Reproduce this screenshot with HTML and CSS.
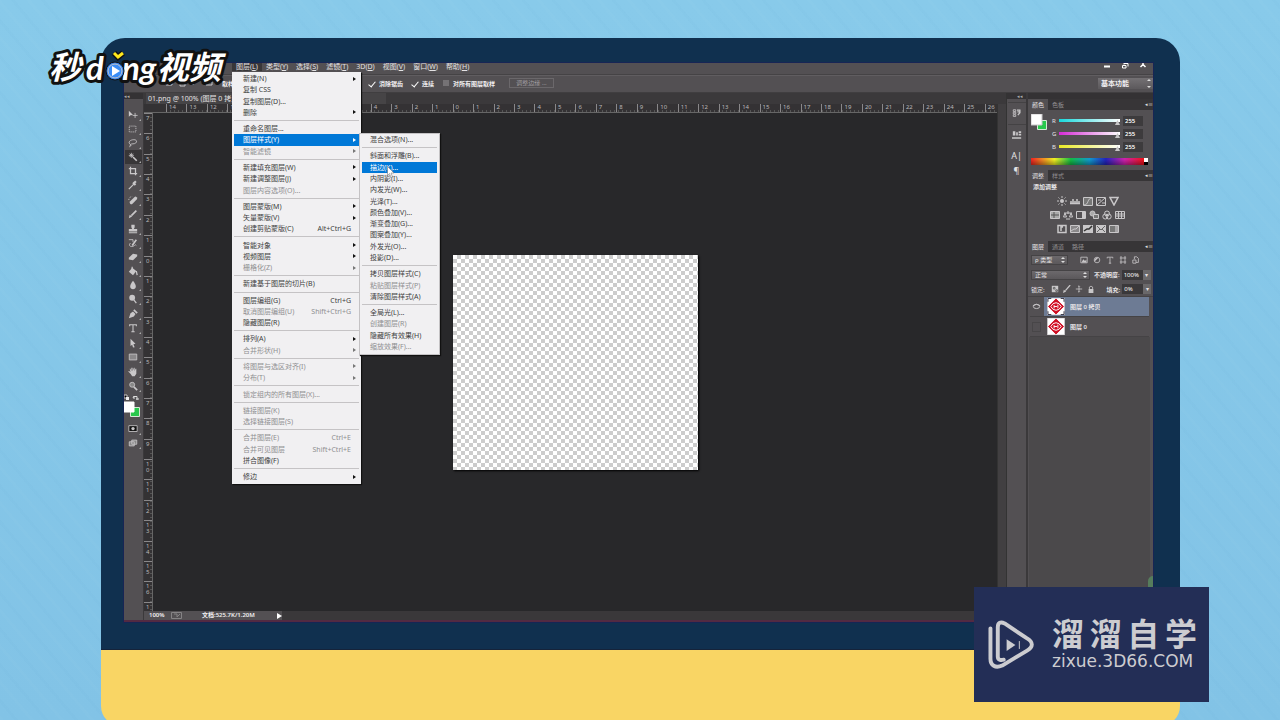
FILE: index.html
```html
<!DOCTYPE html>
<html lang="zh-CN">
<head>
<meta charset="utf-8">
<title>图层样式</title>
<link rel="stylesheet" href="styles.css">
</head>
<body>
<div class="monitor">
<main class="screen">
  <header class="menubar">
    <nav class="menus">
      <button class="open">图层(<u>L</u>)</button><button>类型(<u>Y</u>)</button><button>选择(<u>S</u>)</button><button>滤镜(<u>T</u>)</button><button>3D(<u>D</u>)</button><button>视图(<u>V</u>)</button><button>窗口(<u>W</u>)</button><button>帮助(<u>H</u>)</button>
    </nav>
    <div class="winbtns">
      <button aria-label="最小化"><svg viewBox="0 0 8 6"><path d="M1 3.500h6" stroke-width="2"/></svg></button>
      <button aria-label="还原"><svg viewBox="0 0 8 6"><path d="M3 0v1.500M3 .5h4v3M1.500 2.500h3.500v2.500H1.500z"/></svg></button>
      <button aria-label="关闭"><svg viewBox="0 0 8 6"><path d="M4 0v1.500L1.500 4M4 1.500L6.500 4" stroke-width="1.500"/></svg></button>
    </div>
  </header>
  <div class="options">
    <div class="opt-left"><svg class="bits" viewBox="0 0 50 8"><path d="M1 1h6v5H1zM15 5h5v2h-5zM28 2v4M41 1h6v5h-6z"/></svg><span>取样</span></div>
    <label><input type="checkbox" checked>消除锯齿</label>
    <label><input type="checkbox" checked>连续</label>
    <label><input type="checkbox">对所有图层取样</label>
    <button class="refine" disabled>调整边缘 ...</button>
    <div class="pick workspace"><select aria-label="工作区"><option>基本功能</option></select></div>
  </div>
  <div class="body">
    <aside class="tools">
      <div class="grip">◂◂</div>
      <button aria-label="移动"><svg viewBox="0 0 12 12"><path class="f" d="M1 1l5 5-3 .3L1 8z"/><path d="M8.500 3.500v6M5.500 6.500h6"/></svg></button>
      <button aria-label="矩形选框"><svg viewBox="0 0 12 12"><path d="M1.500 2.500h8v7h-8z" stroke-dasharray="1.500 1"/></svg></button>
      <button aria-label="套索"><svg viewBox="0 0 12 12"><path d="M3 8C-1 5 3 2 7 2c5 0 4 5-1 5-4 0-4 2-2 2M3 8l-1 3"/></svg></button>
      <button aria-label="魔棒" class="on"><svg viewBox="0 0 12 12"><path d="M6 6l4.500 4.500" stroke-width="2"/><path d="M4 1v6M1 4h6M2 2l4 4M6 2L2 6"/></svg></button>
      <button aria-label="裁剪"><svg viewBox="0 0 12 12"><path d="M3 1v8h8M1 3h8v8" stroke-width="1.500"/></svg></button>
      <button aria-label="吸管" class="end"><svg viewBox="0 0 12 12"><path d="M1 11l6-6" stroke-width="1.500"/><path d="M6 3l3 3M7 4l2.500-2.500" stroke-width="2.500"/></svg></button>
      <button aria-label="修复"><svg viewBox="0 0 12 12"><path d="M4 9l5-5" stroke-width="4" stroke-linecap="round"/><path d="M1 6c0-3 2-4 4-4" stroke-dasharray="1 1"/></svg></button>
      <button aria-label="画笔" class="end"><svg viewBox="0 0 12 12"><path d="M4 8l6-6" stroke-width="2"/><path class="f" d="M1 11l1-4 3 2z"/></svg></button>
      <button aria-label="图章"><svg viewBox="0 0 12 12"><path class="f" d="M4 1h4v3L7 6h4v3H1V6h4L4 4zM1 10h10v1H1z"/></svg></button>
      <button aria-label="历史画笔"><svg viewBox="0 0 12 12"><path d="M5 9l5-7" stroke-width="2"/><path d="M1 2h5v3M3 6c-3 3 0 5 3 4s2-3 4-1"/></svg></button>
      <button aria-label="橡皮"><svg viewBox="0 0 12 12"><path class="f" d="M1 7l5-5 5 1v2l-5 5-5-1z"/></svg></button>
      <button aria-label="油漆桶"><svg viewBox="0 0 12 12"><path class="f" d="M1 7l4-5 5 4-4 5z"/><path d="M5 4V1M10 6l1 5" stroke-width="1.500"/></svg></button>
      <button aria-label="模糊"><svg viewBox="0 0 12 12"><path class="f" d="M6 1c5 6 4 10 0 10S1 7 6 1"/></svg></button>
      <button aria-label="减淡" class="end"><svg viewBox="0 0 12 12"><circle class="f" cx="5" cy="4.500" r="3.500"/><path d="M7 7l3 4" stroke-width="1.500"/></svg></button>
      <button aria-label="钢笔"><svg viewBox="0 0 12 12"><path class="f" d="M1 11l2-6 3-2 3 3-2 3z"/><path d="M7 1l4 4" stroke-width="2"/></svg></button>
      <button aria-label="文字" class="end"><svg viewBox="0 0 12 12"><path d="M2 4V2h8v2M6 2v8M4 10.500h4" stroke-width="1.300"/></svg></button>
      <button aria-label="路径选择"><svg viewBox="0 0 12 12"><path class="f" d="M3 1l6 6-2.500.5L8 11l-2 .5L5 8 3 9.500z"/></svg></button>
      <button aria-label="矩形" class="end"><svg viewBox="0 0 12 12"><path d="M1.500 2.500h9v7h-9z" fill="#8a888a"/></svg></button>
      <button aria-label="抓手"><svg viewBox="0 0 12 12"><path class="f" d="M3 8L0 5l2 0 1 1-1-4h1l1 3V1h1.500v4L7 1h1v4l1-3h1l0 6-2 3H5z"/></svg></button>
      <button aria-label="缩放"><svg viewBox="0 0 12 12"><circle cx="5" cy="4.500" r="3" fill="#888"/><path d="M7 7l4 4" stroke-width="2"/></svg></button>
      <svg class="swatches" viewBox="0 0 19 26"><path d="M0 1h3v3H0z" fill="#000"/><path d="M2 3h3v3H2z" fill="#eee" stroke="none"/><path d="M10 5V2.500h3V6M9 4l1-2M12 5h3" stroke="#ddd"/><path d="M6.500 13.500h9v9h-9z" fill="#28c84c" stroke="#d5e9d5"/><path d="M0 8h10v10H0z" fill="#fff" stroke="#fff"/></svg>
      <button aria-label="快速蒙版"><svg viewBox="0 0 12 12"><path d="M1 2h10v7H1z" fill="#111"/><circle class="f" cx="6" cy="5.500" r="2"/></svg></button>
      <button aria-label="屏幕模式"><svg viewBox="0 0 12 12"><path d="M4.500 2.500h6v5h-6zM1.500 4.500h6v5h-6z" fill="#888"/></svg></button>
    </aside>
    <section class="document">
      <div class="tab">01.png @ 100% (图层 0 拷贝</div>
      <div class="ruler-x"><div class="marks">
        <span>14</span><span>13</span><span>12</span><span>11</span><span>10</span><span>9</span><span>8</span><span>7</span><span>6</span><span>5</span><span>4</span><span>3</span><span>2</span><span>1</span><span>0</span><span>1</span><span>2</span><span>3</span><span>4</span><span>5</span><span>6</span><span>7</span><span>8</span><span>9</span><span>10</span><span>11</span><span>12</span><span>13</span><span>14</span><span>15</span><span>16</span><span>17</span><span>18</span><span>19</span><span>20</span><span>21</span><span>22</span><span>23</span><span>24</span><span>25</span><span>26</span>
      </div></div>
      <div class="work">
        <div class="ruler-y"><div class="marks">
          <span>7</span><span>6</span><span>5</span><span>4</span><span>3</span><span>2</span><span>1</span><span>0</span><span>1</span><span>2</span><span>3</span><span>4</span><span>5</span><span>6</span><span>7</span><span>8</span><span>9</span><span>1<br>0</span><span>1<br>1</span><span>1<br>2</span><span>1<br>3</span><span>1<br>4</span><span>1<br>5</span><span>1<br>6</span><span>1</span>
        </div></div>
        <div class="stage"><div class="artboard"></div></div>
      </div>
      <footer class="status"><span class="zoom">100%</span><svg viewBox="0 0 11 8"><path d="M.5.5h10v6H.5zM3 2h3v3M6 5l3-3" fill="none" stroke="#858385"/></svg><span class="size">文档:525.7K/1.20M</span><svg class="next" viewBox="0 0 5 6"><path d="M0 0l5 3-5 3z" fill="#fff" stroke="none"/></svg></footer>
    </section>
    <div class="scroll"></div>
    <aside class="strip">
      <div class="grip">◂◂</div>
      <button aria-label="历史记录"><svg viewBox="0 0 12 12"><path d="M1.500 1.500h3v2h-3zM1.500 4.500h3v2h-3zM1.500 7.500h3v2h-3z"/><path d="M6 2h3.500v3L7 8M6.500 4h3" stroke-width="1.500"/></svg></button>
      <button aria-label="属性" class="end"><svg viewBox="0 0 12 12"><path class="f" d="M1 1h3v5H1zM5 2h2v4H5zM8 1h3v2H8zM8 4h3v2H8zM0 8h11v2H0z"/></svg></button>
      <button aria-label="字符" class="type">A|</button>
      <button aria-label="段落" class="type">¶</button>
    </aside>
    <aside class="panels">
      <div class="grip"></div>
      <div class="tabs"><button class="on">颜色</button><button>色板</button><i>◂≡</i></div>
      <div class="color">
        <svg class="fgbg" viewBox="0 0 18 18"><path d="M6.500 6.500h9v9h-9z" fill="#28c84c" stroke="#d5e9d5"/><path d="M0 0h11v11H0z" fill="#fff"/></svg>
        <div class="sliders">
          <div class="channel"><label for="r">R</label><input id="r" class="cyan" type="range" max="255" value="255"><input type="text" value="255" aria-label="R 值"></div>
          <div class="channel"><label for="g">G</label><input id="g" class="pink" type="range" max="255" value="255"><input type="text" value="255" aria-label="G 值"></div>
          <div class="channel"><label for="b">B</label><input id="b" class="yellow" type="range" max="255" value="255"><input type="text" value="255" aria-label="B 值"></div>
        </div>
      </div>
      <div class="ramp"></div>
      <div class="tabs"><button class="on">调整</button><button>样式</button><i>◂≡</i></div>
      <div class="adjust">
        <p>添加调整</p>
        <div>
          <svg viewBox="0 0 10 10"><circle class="f" cx="5" cy="5" r="2"/><path d="M5 0v2M5 8v2M0 5h2M8 5h2M1.500 1.500l1 1M7.500 7.500l1 1M1.500 8.500l1-1M7.500 2.500l1-1"/></svg>
          <svg viewBox="0 0 10 10"><path d="M0 7.500h10M1 7V5M3 7V3M5 7V5M7 7V3M9 7V5" stroke-width="1.500"/></svg>
          <svg viewBox="0 0 10 10"><path d="M.5 1.500h9v8h-9z" fill="#777"/><path d="M1 9c5 0 3-7 8-7"/></svg>
          <svg viewBox="0 0 10 10"><path d="M.5 1.500h9v8h-9zM1 9l8-7M2 4h3M6 7h3"/></svg>
          <svg viewBox="0 0 10 10"><path d="M1 1.500h8L5 9z" stroke-width="1.500"/></svg>
        </div>
        <div>
          <svg viewBox="0 0 10 10"><path d="M.5 1.500h9v7h-9z" fill="#aaa"/><path d="M1 5h8M4 2v6" stroke="#555"/></svg>
          <svg viewBox="0 0 10 10"><path d="M5 1v3M1 3h8M2 3L.5 7h3zM8 3L6.500 7h3zM3 9h4"/></svg>
          <svg viewBox="0 0 10 10"><path d="M.5 1.500h9v7h-9z"/><path class="f" d="M6 2h3v6H6z"/></svg>
          <svg viewBox="0 0 10 10"><circle cx="3.500" cy="3.500" r="2.500" fill="#aaa"/><path d="M4.500 4.500h5v4h-5z" fill="#777"/></svg>
          <svg viewBox="0 0 10 10"><circle cx="5" cy="3.500" r="2.500"/><circle cx="3.300" cy="6.500" r="2.500"/><circle cx="6.700" cy="6.500" r="2.500"/></svg>
          <svg viewBox="0 0 10 10"><path d="M.5 1.500h9v7h-9zM1 4h8M1 6h8M3.500 2v6M6.500 2v6"/></svg>
        </div>
        <div>
          <svg viewBox="0 0 10 10"><path d="M1 1.500h8v7H1zM6 3H4v4" stroke-width="1.500"/></svg>
          <svg viewBox="0 0 10 10"><path d="M.5 1.500h9v7h-9z" fill="#8a888a"/><path d="M1 7l3-2h2l3-3"/></svg>
          <svg viewBox="0 0 10 10"><path class="f" d="M0 1h10v8H0z"/><path d="M1 7l3-2h2l3-3" stroke="#333" stroke-width="1.500"/></svg>
          <svg viewBox="0 0 10 10"><path class="f" d="M0 1h10v8H0z"/><path d="M1 2l4 4 4-4M1 8l3-3M9 8L6 5" stroke="#666"/></svg>
          <svg viewBox="0 0 10 10"><path d="M.5 1.500h9v7h-9z" fill="#777"/><path class="f" d="M6 2h3v6H6z" opacity=".6"/></svg>
        </div>
      </div>
      <div class="tabs"><button class="on">图层</button><button>通道</button><button>路径</button><i>◂≡</i></div>
      <div class="row filter">
        <div class="pick"><select aria-label="筛选"><option>ρ 类型</option></select></div>
        <span class="icons">
          <svg viewBox="0 0 10 10"><path d="M1 1.500h8v7H1z"/><path class="f" d="M2 8l2-4 2 2 2-1v3z"/></svg>
          <svg viewBox="0 0 10 10"><circle cx="5" cy="5" r="3.500"/><path class="f" d="M2 7a4 4 0 0 1 5-5z"/></svg>
          <svg viewBox="0 0 10 10"><path d="M1.500 3V1.500h7V3M5 2v7M3.500 9h3"/></svg>
          <svg viewBox="0 0 10 10"><path d="M2.500 0v10M7.500 0v10M1 2.500h8M1 7.500h8"/></svg>
          <svg viewBox="0 0 10 10"><path d="M3 4V1h3l2 2v5H5M1 5h4v4H1z"/></svg>
        </span>
      </div>
      <div class="row mode"><div class="pick"><select aria-label="混合模式"><option>正常</option></select></div><label for="op">不透明度:</label><input id="op" value="100%"><button aria-label="不透明度滑块">▾</button></div>
      <div class="row lock"><span>锁定:</span>
        <span class="icons">
          <svg viewBox="0 0 10 10"><path class="f" d="M1 1h8v8H1z"/><path d="M3 3h2v2H3zM6 6h2v2H6z" stroke="#555"/></svg>
          <svg viewBox="0 0 10 10"><path d="M3 7l6-7" stroke-width="1.500"/><path class="f" d="M0 10l1-4 3 2z"/></svg>
          <svg viewBox="0 0 10 10"><path d="M5 1v8M1 5h8M4 2l1-1 1 1M4 8l1 1 1-1"/></svg>
          <svg viewBox="0 0 10 10"><path class="f" d="M2 5h6v5H2z"/><path d="M3 5V2.500q2-2 4 0V5"/></svg>
        </span>
        <label for="fill">填充:</label><input id="fill" value="0%"><button aria-label="填充滑块">▾</button></div>
      <div class="layer on"><span class="eye"><svg viewBox="0 0 10 10"><ellipse cx="5" cy="5" rx="3.500" ry="2.300"/><path d="M1 4q4-3 8 0"/></svg></span><svg class="thumb" viewBox="0 0 18 18"><path d="M0 0h18v18H0z" fill="#fff"/><path d="M9 1l8 8-8 8-8-8z" fill="#d01025" stroke="#d01025"/><path d="M3.500 9q2-4 5.500-4t5.500 4q-2 4-5.500 4T3.500 9z" stroke="#fff"/><path d="M7 7.500v3.500M7 9h3M11 7v4" stroke="#fff"/><path d="M.5 4V.5H4M14 .5h3.500V4M17.500 14v3.500H14M4 17.500H.5V14" stroke="#334"/></svg><span>图层 0 拷贝</span></div>
      <div class="layer"><span class="eye hidden"></span><svg class="thumb" viewBox="0 0 18 18"><path d="M0 0h18v18H0z" fill="#fff"/><path d="M9 1l8 8-8 8-8-8z" fill="#d01025" stroke="#d01025"/><path d="M3.500 9q2-4 5.500-4t5.500 4q-2 4-5.500 4T3.500 9z" stroke="#fff"/><path d="M7 7.500v3.500M7 9h3M11 7v4" stroke="#fff"/></svg><span>图层 0</span></div>
      <div class="rest"></div>
    </aside>
  </div>

  <ul class="menu main-menu">
    <li class="sub">新建(N)</li><li>复制 CSS</li><li>复制图层(D)...</li><li class="sub">删除</li><hr>
    <li>重命名图层...</li><li class="sub hot">图层样式(Y)</li><li class="sub off">智能滤镜</li><hr>
    <li class="sub">新建填充图层(W)</li><li class="sub">新建调整图层(J)</li><li class="off">图层内容选项(O)...</li><hr>
    <li class="sub">图层蒙版(M)</li><li class="sub">矢量蒙版(V)</li><li>创建剪贴蒙版(C)<kbd>Alt+Ctrl+G</kbd></li><hr>
    <li class="sub">智能对象</li><li class="sub">视频图层</li><li class="sub off">栅格化(Z)</li><hr>
    <li>新建基于图层的切片(B)</li><hr>
    <li>图层编组(G)<kbd>Ctrl+G</kbd></li><li class="off">取消图层编组(U)<kbd>Shift+Ctrl+G</kbd></li><li>隐藏图层(R)</li><hr>
    <li class="sub">排列(A)</li><li class="sub off">合并形状(H)</li><hr>
    <li class="sub off">将图层与选区对齐(I)</li><li class="sub off">分布(T)</li><hr>
    <li class="off">锁定组内的所有图层(X)...</li><hr>
    <li class="off">链接图层(K)</li><li class="off">选择链接图层(S)</li><hr>
    <li class="off">合并图层(E)<kbd>Ctrl+E</kbd></li><li class="off">合并可见图层<kbd>Shift+Ctrl+E</kbd></li><li>拼合图像(F)</li><hr>
    <li class="sub">修边</li>
  </ul>
  <ul class="menu sub-menu">
    <li>混合选项(N)...</li><hr>
    <li>斜面和浮雕(B)...</li><li class="hot">描边(K)...</li><li>内阴影(I)...</li><li>内发光(W)...</li><li>光泽(T)...</li><li>颜色叠加(V)...</li><li>渐变叠加(G)...</li><li>图案叠加(Y)...</li><li>外发光(O)...</li><li>投影(D)...</li><hr>
    <li>拷贝图层样式(C)</li><li class="off">粘贴图层样式(P)</li><li>清除图层样式(A)</li><hr>
    <li>全局光(L)...</li><li class="off">创建图层(R)</li><li>隐藏所有效果(H)</li><li class="off">缩放效果(F)...</li>
  </ul>
  <svg class="cursor" viewBox="0 0 8 12"><path d="M.5.5v9l2-2 1.500 4 1.500-.5-1.500-4h3z" fill="#fff" stroke="#666" stroke-width=".5"/></svg>
  <i class="bubble"></i>
</main>
</div>
<div class="base"></div>

<svg class="logo" viewBox="0 0 190 56">
  <g class="logo-text">
    <text x="5" y="36" class="han">秒</text><text x="42" y="37">d</text><text x="78" y="37">ng</text><text x="113" y="36" class="han">视频</text>
  </g>
  <circle cx="71" cy="28" r="9" fill="#2f7fea" stroke="#111"/><circle cx="71" cy="28" r="7" fill="#3b8df5"/>
  <path d="M68 23l8 5-8 5z" fill="#fff" stroke="none"/>
  <path d="M70 10l4 4 5-4" stroke="#111" stroke-width="6"/><path d="M70 10l4 4 5-4" stroke="#ffe81c" stroke-width="3"/>
</svg>

<aside class="brand">
  <svg viewBox="0 0 48 52"><g stroke="#ccccd0" stroke-linecap="round" stroke-linejoin="round" stroke-width="4"><path d="M2.500 9v31c0 7 5 10 12 7l25-15c7-4 7-9 0-13L17 4c-4-2-7-1-7 4v30c0 3 3 4 6 3"/><path d="M32 22v8" stroke-width="1" stroke-linecap="butt"/></g><path d="M19 20l9 6-9 6z" fill="#ccccd0" stroke="none"/></svg>
  <div class="brand-text"><div class="cn"><span>溜</span><span>溜</span><span>自</span><span>学</span></div><div class="url">zixue.3D66.COM</div></div>
</aside>
</body>
</html>
```
FILE: styles.css
```css
* { box-sizing: border-box; }
body {
  margin: 0;
  height: 100vh;
  overflow: hidden;
  position: relative;
  display: flex;
  flex-direction: column;
  padding: 38px 100px 0 101px;
  font-family: "Noto Sans", "Noto Sans CJK SC", sans-serif;
  font-size: 7px;
  color: #e4e2e4;
  background:
    repeating-linear-gradient(50deg, rgba(255,255,255,.02) 0 3px, transparent 3px 11px, rgba(30,110,170,.02) 11px 14px, transparent 14px 23px),
    linear-gradient(180deg, #88caea, #82c3e6);
}
button, input, select { font: inherit; color: inherit; border: 0; padding: 0; margin: 0; background: none; border-radius: 0; }
select { appearance: none; }
svg { display: block; flex: none; fill: none; stroke: #c9c7c9; }
svg .f { fill: #c9c7c9; stroke: none; }

.monitor { flex: 1; min-height: 0; display: flex; padding: 25px 27px 27px 23px; background: #10304f; border-radius: 24px 24px 0 0; border-bottom: 1px solid #15233a; }
.base { flex: none; height: 76px; margin-bottom: -6px; background: #f9d564; border-radius: 0 0 20px 20px; }
.screen { position: relative; flex: 1; min-width: 0; display: flex; flex-direction: column; background: #535053; border-bottom: 2px solid #532a42; box-shadow: 0 0 0 1px #172555; }

.menubar { flex: none; height: 12px; display: flex; justify-content: space-between; border-bottom: 1px solid #454345; overflow: hidden; }
.menus { display: flex; margin-left: 108px; }
.menus button { padding: 0 4px; height: 8px; line-height: 6px; white-space: nowrap; }
.menus .open { background: #393739; }
.winbtns { display: flex; gap: 8px; padding-right: 4px; }
.winbtns button { width: 10px; height: 6px; }
.winbtns svg { width: 8px; height: 6px; stroke: #fff; }

.options { flex: none; height: 18px; display: flex; align-items: center; padding: 0 0 2px 41px; border-top: 1px solid #605d60; border-bottom: 1px solid #403e40; font-size: 6px; font-weight: 600; color: #f1eff1; }
.opt-left { width: 203px; display: flex; align-items: center; gap: 7px; }
.bits { width: 50px; height: 8px; }
.options label { display: flex; align-items: center; gap: 3px; margin-right: 8px; }
.options input { appearance: none; width: 8px; height: 8px; border: 1px solid #535053; background: #757275; display: grid; place-items: center; }
.options input:checked { background: none; }
.options input:checked::after { content: ""; width: 3px; height: 6px; border: solid #fff; border-width: 0 1px 1px 0; transform: rotate(40deg); }
.refine { margin-left: 6px; width: 45px; height: 10px; border: 1px solid #6b686b; color: #a09da0; font-weight: 400; line-height: 8px; }
.pick { position: relative; display: flex; }
.pick select { flex: 1; min-width: 0; padding-left: 3px; }
.pick::before, .pick::after { content: ""; position: absolute; right: 2px; border: 2px solid transparent; }
.pick::before { top: 1px; border-bottom: 2px solid #ddd; border-top: 0; }
.pick::after { bottom: 1px; border-top: 2px solid #ddd; border-bottom: 0; }
.workspace { margin-left: auto; width: 55px; height: 11px; font-size: 7px; background: linear-gradient(#747174, #5c595c); }

.body { flex: 1; min-height: 0; display: flex; background: #3b393b; }
.grip { align-self: stretch; flex: none; height: 6px; margin-bottom: 9px; background: #343234; font-size: 5px; line-height: 6px; color: #aaa; }
.tools { flex: none; width: 19px; display: flex; flex-direction: column; align-items: center; background: #535053; }
.tools button { flex: none; width: 17px; height: 14px; padding: 2px 3px; position: relative; }
.tools button::after { content: ""; position: absolute; right: 1px; bottom: 1px; border: 1px solid; border-color: transparent #aaa #aaa transparent; }
.tools button svg { width: 10px; height: 10px; }
.tools .end { margin-bottom: 1px; }
.tools .on { background: #383638; }
.swatches { width: 19px; height: 26px; margin: 1px 0 2px; }

.document { flex: 1; min-width: 0; display: flex; flex-direction: column; padding-left: 1px; }
.tab { flex: none; height: 11px; width: 240px; margin-left: 2px; padding-left: 2px; line-height: 11px; background: #464446; white-space: nowrap; }
.ruler-x { flex: none; height: 9px; overflow: hidden; padding-left: 22px; background: #343234; border-bottom: 1px solid #666; }
.marks { display: flex; font-size: 6px; line-height: 6px; color: #b9b7b9; }
.ruler-x .marks { height: 8px; margin-right: -8px; background: repeating-linear-gradient(90deg, #555 0 1px, transparent 1px 4px) 0 100% / 100% 2px no-repeat; }
.ruler-x span { flex: 1 1 0; min-width: 0; border-left: 1px solid #898789; padding-left: 2px; }
.work { flex: 1; min-height: 0; display: flex; }
.ruler-y { flex: none; width: 9px; overflow: hidden; display: flex; background: #343234; border-right: 1px solid #666; }
.ruler-y .marks { flex: 1; flex-direction: column; margin-bottom: -11px; background: repeating-linear-gradient(#555 0 1px, transparent 1px 4px) 100% 0 / 2px 100% no-repeat; }
.ruler-y span { flex: 1 1 0; min-height: 0; border-top: 1px solid #898789; padding: 1px 0 0 2px; }
.stage { flex: 1; display: grid; place-content: center; background: #28282a; }
.artboard { width: 245px; height: 215px; background: repeating-conic-gradient(#ccc 0 25%, #fff 0 50%) 0 0 / 8px 8px; box-shadow: 1px 1px 2px #000; }
.status { flex: none; height: 9px; display: flex; align-items: center; line-height: 9px; padding-left: 5px; font-size: 6px; font-weight: 600; color: #f2f0f2; background: linear-gradient(90deg, #535053 0 138px, #3a383a 138px); }
.zoom { width: 22px; }
.status svg { width: 11px; height: 8px; }
.size { width: 95px; padding-left: 20px; white-space: nowrap; }
.status .next { width: 5px; height: 6px; }
.scroll { flex: none; width: 9px; margin-top: 11px; background: #413f41; border-left: 1px solid #333; }

.strip { flex: none; width: 20px; display: flex; flex-direction: column; align-items: center; background: #535053; border-left: 1px solid #333; }
.strip .grip { text-align: right; margin-bottom: 3px; padding-right: 3px; }
.strip button { width: 18px; height: 22px; padding: 4px; border-top: 1px solid #444244; }
.strip svg { width: 10px; height: 11px; }
.strip .end { margin-bottom: 2px; }
.strip .type { height: 15px; padding: 0; font-size: 9px; line-height: 14px; border: 0; }

.panels { flex: none; width: 125px; display: flex; flex-direction: column; margin-left: 2px; background: #535053; }
.panels .grip { margin: 0; }
.tabs { flex: none; height: 11px; display: flex; background: #373537; line-height: 10px; }
.tabs button { padding: 0 4px; font-size: 6px; color: #928f92; }
.tabs .on { background: #535053; color: #e4e2e4; }
.tabs i { margin-left: auto; font-size: 5px; font-style: normal; }
.color { flex: none; display: flex; height: 48px; padding: 4px 8px 0 3px; gap: 3px; }
.fgbg { width: 18px; height: 18px; }
.sliders { flex: 1; }
.channel { display: flex; align-items: center; height: 13px; line-height: 10px; font-size: 6px; }
.channel label { width: 7px; }
.channel input[type=range] { appearance: none; width: 61px; height: 3px; outline: 0; }
.channel input[type=range]::-webkit-slider-thumb { appearance: none; width: 5px; height: 5px; background: #c9c7c9; clip-path: polygon(50% 0, 100% 100%, 0 100%); margin-top: 4px; }
.cyan { background: linear-gradient(90deg, #18d8dc, #fff); }
.pink { background: linear-gradient(90deg, #d52bd5, #fff); }
.yellow { background: linear-gradient(90deg, #eaea25, #fff); }
.channel input[type=text] { width: 20px; height: 10px; margin-left: 3px; padding-left: 2px; font-size: 6px; font-weight: 600; color: #fff; background: #3d3b3d; }
.ramp { flex: none; height: 7px; margin: 0 5px 5px 3px; background: linear-gradient(#fff 50%, #000 50%) 100% 0 / 4px 100% no-repeat, linear-gradient(transparent 20%, rgba(0,0,0,.35)), linear-gradient(90deg, #e22, #ee2 20%, #1b4 34%, #19c 50%, #22b 64%, #c2a 80%, #e11 97%); }
.adjust { flex: none; height: 60px; padding: 2px 5px 0; }
.adjust p { margin: 0 0 4px; line-height: 9px; font-size: 6px; font-weight: 600; }
.adjust div { display: flex; justify-content: center; gap: 3px; height: 14px; padding-right: 6px; }
.adjust svg { width: 10px; height: 10px; }
.row { flex: none; height: 15px; padding: 2px 0 2px 3px; display: flex; align-items: center; font-size: 6px; }
.row .pick { height: 10px; background: linear-gradient(#6c696c, #5b585b); border: 1px solid #454345; }
.filter .pick { width: 37px; }
.mode .pick { width: 59px; margin-right: 4px; }
.row input { width: 21px; height: 10px; background: #3a383a; color: #fff; margin-left: 2px; padding-left: 2px; }
.row button { width: 8px; height: 10px; background: #6a686a; }
.row label { white-space: nowrap; font-weight: 600; }
.row .icons { display: flex; gap: 5px; }
.row .icons svg { width: 8px; height: 8px; }
.filter .icons { margin-left: 12px; }
.lock .icons { margin: 0 12px 0 6px; gap: 4px; }
.lock { border-bottom: 1px solid #454345; }
.layer { flex: none; height: 20px; margin: 0 4px 0 2px; display: flex; align-items: center; border-bottom: 1px solid #454345; white-space: nowrap; font-size: 6px; font-weight: 600; }
.layer.on { background: linear-gradient(90deg, #535053 14px, #6d7b94 14px); }
.eye { width: 14px; height: 10px; padding-left: 2px; flex: none; }
.eye svg { width: 9px; height: 9px; }
.eye.hidden::before { content: ""; display: block; width: 7px; height: 8px; border: 1px solid #484648; }
.thumb { width: 18px; height: 17px; margin: 0 5px 0 3px; }
.rest { flex: 1; margin: 0 3px 0 1px; background: #4b494b; }

.menu { position: absolute; margin: 0; padding: 1px 2px 2px; list-style: none; display: flex; flex-direction: column; color: #404040; background: #f1f0f2; box-shadow: 1px 1px 1px #111; line-height: 11px; }
.main-menu { left: 108px; top: 9px; width: 129px; height: 412px; }
.sub-menu { left: 235px; top: 70px; width: 81px; height: 222px; padding-top: 0; border: 1px solid #c4c2c4; }
.menu li { flex: 1 1 11px; min-height: 0; display: flex; justify-content: space-between; align-items: center; padding: 0 8px 0 9px; white-space: nowrap; }
.sub-menu li { padding: 0 8px; }
.menu hr { flex: none; width: 100%; height: 1px; margin: 2px 0; border: 0; background: #c5c3c5; }
.menu .off { color: #8f8f91; }
.menu .sub { padding-right: 3px; }
.menu .sub::after { content: ""; border: 2px solid transparent; border-left: 3px solid #111; border-right: 0; }
.menu .off.sub::after { border-left-color: #777; }
.menu .hot { background: #0078d7; color: #fff; }
.menu .hot.sub::after { border-left-color: #fff; }
.menu kbd { font: inherit; }
.cursor { position: absolute; left: 263px; top: 103px; width: 8px; height: 12px; }
.bubble { position: absolute; right: 0; bottom: 29px; width: 5px; height: 15px; border-radius: 15px 0 0 0; background: #567d5c; }

.logo { position: absolute; left: 44px; top: 43px; width: 190px; height: 56px; }
.logo-text { font: italic 700 33px Lato, "Noto Sans CJK SC", sans-serif; fill: #fff; stroke: #111; stroke-width: 6px; stroke-linejoin: round; paint-order: stroke; }
.han { font-size: 32px; }

.brand { position: absolute; right: 71px; bottom: 18px; width: 235px; height: 115px; padding: 0 12px 0 14px; display: flex; align-items: center; justify-content: space-between; background: #232e56; color: #ccccd0; }
.brand > svg { width: 47px; height: 52px; }
.brand-text { width: 145px; }
.cn { display: flex; justify-content: space-between; font-size: 32px; line-height: 32px; font-weight: 700; }
.url { font: 17px/22px "DejaVu Sans", sans-serif; }
```
